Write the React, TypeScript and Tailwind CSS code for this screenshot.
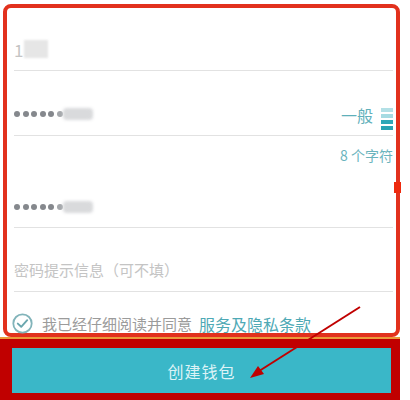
import React from 'react';

const font = { fontFamily: '"Noto Sans CJK SC", "Noto Sans", sans-serif' };

function Dots() {
  return (
    <div className="flex items-center">
      {[0, 1, 2, 3, 4, 5].map(i => (
        <span key={i} className={`mr-[2.5px] h-[6px] w-[6px] rounded-full ${i === 5 ? 'bg-[#a4a7ab]' : 'bg-[#85888d]'}`} />
      ))}
      <span className="ml-[-2px] h-[12px] w-[30px] rounded-sm bg-[#d9dadc] blur-[1.5px]" />
    </div>
  );
}

export default function App() {
  return (
    <div className="relative h-[400px] w-[410px] overflow-hidden bg-white" style={font}>
      {/* form card */}
      <div className="ml-[3px] mt-[4px] h-[333px] w-[397px] rounded-[8px] border-4 border-[#e2311d] bg-white pl-[7px] pr-[3px]">
        <div className="flex h-[63px] items-end border-b border-[#e2e2e2] pb-[12px]">
          <span className="text-[17px] leading-none text-[#c4c4c4]">1</span>
          <span className="ml-[1px] h-[18px] w-[24px] bg-[#e6e6e6] blur-[1px]" />
        </div>
        <div className="flex h-[65px] items-end justify-between border-b border-[#e2e2e2] pb-[5px]">
          <div className="mb-[10px]"><Dots /></div>
          <div className="flex items-end">
            <span className="mb-[7px] text-[16px] leading-none text-[#5fb0ba]">一般</span>
            <div className="ml-[8px] flex w-[12px] flex-col gap-[2px]">
              <span className="h-[4px] bg-[#b3e0e6]" />
              <span className="h-[4px] bg-[#a6dbe2]" />
              <span className="h-[4px] bg-[#2fa7b7]" />
              <span className="h-[4px] bg-[#2aa3b4]" />
            </div>
          </div>
        </div>
        <div className="flex h-[92px] flex-col justify-between border-b border-[#e2e2e2] pb-[14px] pt-[12px]">
          <div className="text-right text-[14px] leading-none text-[#6bb4bd]">8 个字符</div>
          <Dots />
        </div>
        <div className="flex h-[64px] items-end border-b border-[#e2e2e2] pb-[14px]">
          <span className="text-[15px] leading-none text-[#c4c4c4]">密码提示信息（可不填）</span>
        </div>
        <div className="-ml-[2px] flex items-center pt-[21px]">
          <svg width="21" height="21" viewBox="0 0 21 21">
            <circle cx="10.5" cy="10.5" r="9.2" fill="none" stroke="#82b4ba" strokeWidth="1.8" />
            <path d="M5.8 10.6 L9.2 13.8 L15.2 7.2" fill="none" stroke="#6aa6ae" strokeWidth="1.9" strokeLinecap="round" strokeLinejoin="round" />
          </svg>
          <span className="ml-[9px] text-[15px] leading-none text-[#9b9b9b]">我已经仔细阅读并同意</span>
          <span className="ml-[7px] text-[16px] leading-none text-[#4ea9b5]">服务及隐私条款</span>
        </div>
      </div>

      <div className="h-[2px] w-[400px] bg-[#eb9a3a]" />

      {/* create button */}
      <div className="w-[400px] border-b-[7px] border-l-[12px] border-r-[9px] border-t-[9px] border-[#c00000]">
        <button className="flex h-[45px] w-full items-center justify-center bg-[#3ab7c8] text-[16px] tracking-[1px] text-[#ddf3f6]">
          创建钱包
        </button>
      </div>

      {/* scrollbar marker */}
      <span className="absolute left-[394px] top-[182px] h-[11px] w-[7px] bg-[#ee2a0e]" />

      {/* annotation arrow */}
      <svg className="pointer-events-none absolute left-0 top-0" width="410" height="400">
        <line x1="360" y1="307" x2="256" y2="373" stroke="#c00000" strokeWidth="2" />
        <polygon points="250,378 258,366 264,374" fill="#c00000" />
      </svg>
    </div>
  );
}
